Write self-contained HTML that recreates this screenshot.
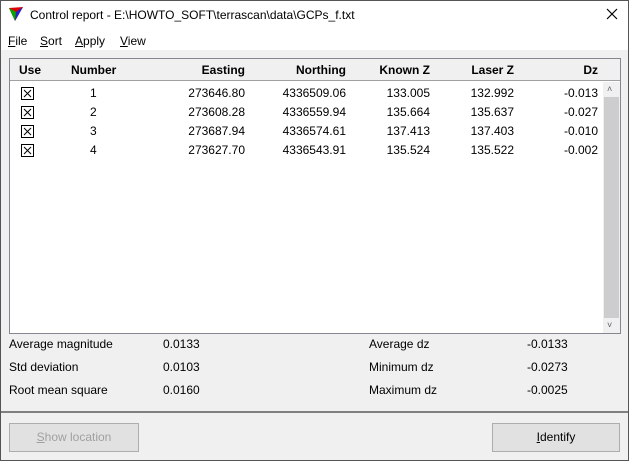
<!DOCTYPE html><html><head><style>
*{margin:0;padding:0;box-sizing:border-box}
body{width:629px;height:461px;overflow:hidden;font-family:"Liberation Sans",sans-serif;font-size:12px;color:#000;background:#f0f0f0;position:relative}
.a{position:absolute;white-space:nowrap}
.r{text-align:right}
.cb{position:absolute;width:12px;height:12px;border:1px solid #000;background:#fff}
</style></head><body>
<div class="a" style="left:0;top:0;width:629px;height:50px;background:#fff"></div>
<svg class="a" style="left:8px;top:6px" width="16" height="16"><polygon points="1,2 15,1 7,15" fill="#d00"/><polygon points="1,2 8,6 7,15" fill="#0a0"/><polygon points="15,1 8,6 7,15" fill="#22c"/></svg>
<div class="a" style="left:30px;top:8px;font-size:12px">Control report - E:\HOWTO_SOFT\terrascan\data\GCPs_f.txt</div>
<svg class="a" style="left:606px;top:8px" width="12" height="12"><path d="M1 1L11 11M11 1L1 11" stroke="#000" stroke-width="1.2"/></svg>
<div class="a" style="left:8px;top:34px"><u>F</u>ile</div>
<div class="a" style="left:40px;top:34px"><u>S</u>ort</div>
<div class="a" style="left:75px;top:34px"><u>A</u>pply</div>
<div class="a" style="left:120px;top:34px"><u>V</u>iew</div>
<div class="a" style="left:9px;top:58px;width:612px;height:276px;border:1px solid #828790;background:#fff"></div>
<div class="a" style="left:10px;top:59px;width:610px;height:22px;background:#f0f0f0;border-bottom:1px solid #a0a0a0"></div>
<div class="a" style="left:19px;top:63px;font-weight:bold">Use</div>
<div class="a" style="left:71px;top:63px;font-weight:bold">Number</div>
<div class="a r" style="right:384px;top:63px;font-weight:bold">Easting</div>
<div class="a r" style="right:283px;top:63px;font-weight:bold">Northing</div>
<div class="a r" style="right:199px;top:63px;font-weight:bold">Known Z</div>
<div class="a r" style="right:115px;top:63px;font-weight:bold">Laser Z</div>
<div class="a r" style="right:31px;top:63px;font-weight:bold">Dz</div>
<div class="a" style="left:603px;top:82px;width:17px;height:251px;background:#f0f0f0"></div>
<div class="a" style="left:604px;top:97px;width:15px;height:221px;background:#cdcdcd"></div>
<div class="a" style="left:607px;top:84px;font-size:9px;color:#606060">&#708;</div>
<div class="a" style="left:607px;top:320px;font-size:9px;color:#606060">&#709;</div>
<div id="rows"></div>
<div class="a" style="left:9px;top:337px">Average magnitude</div>
<div class="a" style="left:163px;top:337px">0.0133</div>
<div class="a" style="left:369px;top:337px">Average dz</div>
<div class="a" style="left:527px;top:337px">-0.0133</div>
<div class="a" style="left:9px;top:360px">Std deviation</div>
<div class="a" style="left:163px;top:360px">0.0103</div>
<div class="a" style="left:369px;top:360px">Minimum dz</div>
<div class="a" style="left:527px;top:360px">-0.0273</div>
<div class="a" style="left:9px;top:383px">Root mean square</div>
<div class="a" style="left:163px;top:383px">0.0160</div>
<div class="a" style="left:369px;top:383px">Maximum dz</div>
<div class="a" style="left:527px;top:383px">-0.0025</div>
<div class="a" style="left:0;top:411px;width:629px;height:2px;background:#808080"></div>
<div class="a" style="left:9px;top:423px;width:130px;height:29px;border:1px solid #adadad;background:#e1e1e1;color:#a0a0a0;text-align:center;line-height:27px"><u>S</u>how location</div>
<div class="a" style="left:492px;top:423px;width:128px;height:29px;border:1px solid #adadad;background:#e1e1e1;text-align:center;line-height:27px"><u>I</u>dentify</div>
<div class="a" style="left:0;top:0;width:629px;height:461px;border:1px solid #555"></div>
<script>
var d=[[1,"273646.80","4336509.06","133.005","132.992","-0.013"],[2,"273608.28","4336559.94","135.664","135.637","-0.027"],[3,"273687.94","4336574.61","137.413","137.403","-0.010"],[4,"273627.70","4336543.91","135.524","135.522","-0.002"]];
var h="";d.forEach(function(r,i){var t=86+i*19;
h+='<svg class="a" style="left:21px;top:'+(t+1)+'px" width="13" height="13"><rect x="0.5" y="0.5" width="12" height="12" fill="#fff" stroke="#000"/><path d="M3 3L10 10M10 3L3 10" stroke="#000"/></svg>';
h+='<div class="a" style="left:90px;top:'+t+'px">'+r[0]+'</div>';
var rs=[384,283,199,115,31];for(var k=0;k<5;k++)h+='<div class="a r" style="right:'+rs[k]+'px;top:'+t+'px">'+r[k+1]+'</div>';});
document.getElementById("rows").innerHTML=h;
</script>
</body></html>
